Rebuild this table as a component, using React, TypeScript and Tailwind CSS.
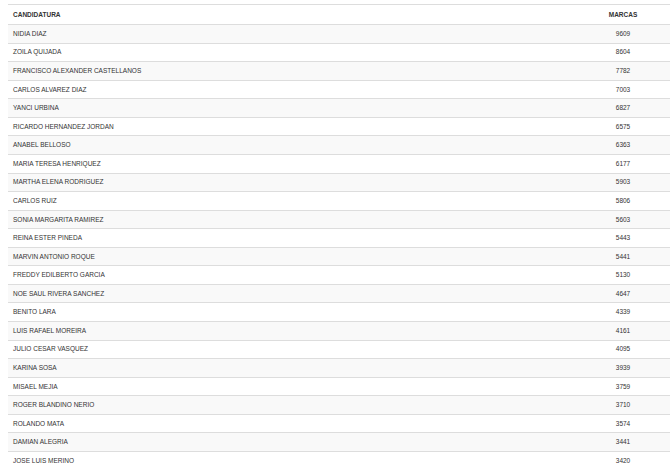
const rows: [string, number][] = [
  ['NIDIA DIAZ', 9609],
  ['ZOILA QUIJADA', 8604],
  ['FRANCISCO ALEXANDER CASTELLANOS', 7782],
  ['CARLOS ALVAREZ DIAZ', 7003],
  ['YANCI URBINA', 6827],
  ['RICARDO HERNANDEZ JORDAN', 6575],
  ['ANABEL BELLOSO', 6363],
  ['MARIA TERESA HENRIQUEZ', 6177],
  ['MARTHA ELENA RODRIGUEZ', 5903],
  ['CARLOS RUIZ', 5806],
  ['SONIA MARGARITA RAMIREZ', 5603],
  ['REINA ESTER PINEDA', 5443],
  ['MARVIN ANTONIO ROQUE', 5441],
  ['FREDDY EDILBERTO GARCIA', 5130],
  ['NOE SAUL RIVERA SANCHEZ', 4647],
  ['BENITO LARA', 4339],
  ['LUIS RAFAEL MOREIRA', 4161],
  ['JULIO CESAR VASQUEZ', 4095],
  ['KARINA SOSA', 3939],
  ['MISAEL MEJIA', 3759],
  ['ROGER BLANDINO NERIO', 3710],
  ['ROLANDO MATA', 3574],
  ['DAMIAN ALEGRIA', 3441],
  ['JOSE LUIS MERINO', 3420],
];

export default function App() {
  return (
    <div className="w-[670px] h-[470px] overflow-hidden bg-white pt-[4px] pl-[8px] font-['Liberation_Sans',Arial,sans-serif] text-[6.5px] text-[#333]">
      <table className="w-[662px] border-collapse">
        <thead>
          <tr className="h-[20px] border-t border-b border-[#ddd]">
            <th className="text-left pl-[5px] font-bold">CANDIDATURA</th>
            <th className="w-[94px] text-center font-bold">MARCAS</th>
          </tr>
        </thead>
        <tbody>
          {rows.map(([name, n], i) => (
            <tr key={name} className={`h-[18.57px] border-b border-[#ddd] ${i % 2 === 0 ? 'bg-[#f9f9f9]' : 'bg-white'}`}>
              <td className="pl-[5px]">{name}</td>
              <td className="text-center">{n}</td>
            </tr>
          ))}
        </tbody>
      </table>
    </div>
  );
}
